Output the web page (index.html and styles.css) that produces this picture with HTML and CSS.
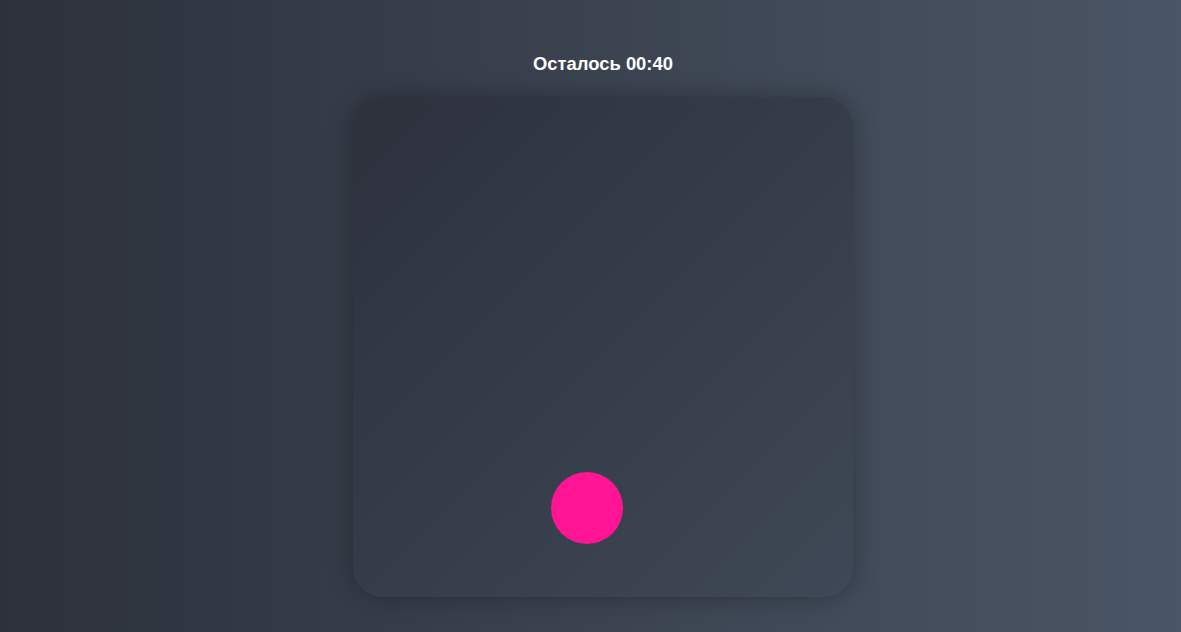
FILE: index.html
```html
<!DOCTYPE html>
<html lang="ru">
<head>
<meta charset="utf-8">
<title>Игра</title>
<link rel="stylesheet" href="styles.css">
</head>
<body>
<main class="game">
  <h2 class="timer">Осталось 00:40</h2>
  <div class="field">
    <div class="ball"></div>
  </div>
</main>
</body>
</html>
```
FILE: styles.css
```css
html, body {
  margin: 0;
  height: 100%;
}
body {
  background: linear-gradient(to right, #2c313b, #4a5565);
  font-family: "Liberation Sans", Arial, sans-serif;
  color: #fff;
  overflow: hidden;
}
.game {
  display: flex;
  flex-direction: column;
  align-items: center;
  padding-top: 53px;
  padding-left: 25px;
}
.timer {
  margin: 0 0 23px;
  font-size: 18.4px;
  font-weight: bold;
  line-height: 21px;
}
.field {
  position: relative;
  width: 500px;
  height: 500px;
  border-radius: 30px;
  background: linear-gradient(135deg, #2c313c, #3f4856);
  box-shadow: 0 0 25px rgba(0, 0, 0, 0.28);
}
.ball {
  position: absolute;
  left: 198px;
  top: 375px;
  width: 72px;
  height: 72px;
  border-radius: 50%;
  background: #ff1493;
}
```
